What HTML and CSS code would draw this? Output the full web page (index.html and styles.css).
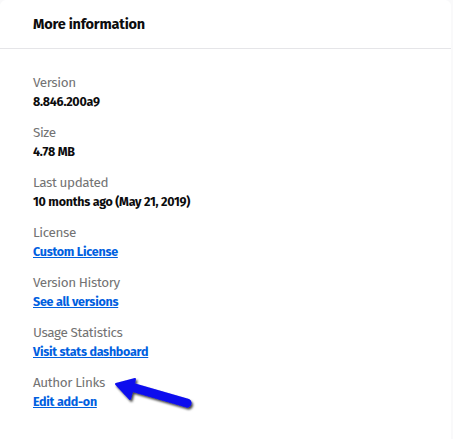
FILE: index.html
```html
<!DOCTYPE html>
<html lang="en">
<head>
<meta charset="utf-8">
<title>More information</title>
<link rel="stylesheet" href="styles.css">
</head>
<body>
<section class="card">
  <header class="card-header">
    <h2 class="card-title">More information</h2>
  </header>
  <dl class="meta">
    <div class="meta-item">
      <dt>Version</dt>
      <dd>8.846.200a9</dd>
    </div>
    <div class="meta-item">
      <dt>Size</dt>
      <dd>4.78 MB</dd>
    </div>
    <div class="meta-item">
      <dt>Last updated</dt>
      <dd>10 months ago (May 21, 2019)</dd>
    </div>
    <div class="meta-item">
      <dt>License</dt>
      <dd><a href="#">Custom License</a></dd>
    </div>
    <div class="meta-item">
      <dt>Version History</dt>
      <dd><a href="#">See all versions</a></dd>
    </div>
    <div class="meta-item">
      <dt>Usage Statistics</dt>
      <dd><a href="#">Visit stats dashboard</a></dd>
    </div>
    <div class="meta-item author">
      <dt>Author Links</dt>
      <dd><a href="#">Edit add-on</a></dd>
      <svg class="pointer" width="90" height="40" viewBox="0 0 90 40" aria-hidden="true">
        <defs>
          <filter id="drop" x="-20%" y="-40%" width="150%" height="190%">
            <feDropShadow dx="1.5" dy="2" stdDeviation="1.2" flood-color="#000" flood-opacity="0.75"/>
          </filter>
        </defs>
        <g filter="url(#drop)" fill="#0a0aee" stroke="#0a0aee" stroke-linejoin="round" stroke-linecap="round">
          <line x1="22" y1="12" x2="74" y2="27" stroke-width="9" fill="none"/>
          <polygon points="3,8 22,3 17,23" stroke-width="2"/>
        </g>
      </svg>
    </div>
  </dl>
</section>
</body>
</html>
```
FILE: styles.css
```css
html, body {
  margin: 0;
  padding: 0;
  background: #f9f9fa;
}

body {
  font-family: "Fira Sans", "Lato", "Open Sans", sans-serif;
  color: #0c0c0d;
}

.card {
  background: #fff;
  border-radius: 6px 6px 0 0;
  width: 451px;
  min-height: 439px;
}

.card-header {
  height: 48px;
  border-bottom: 1px solid #e5e5e8;
  padding: 0 33px;
  display: flex;
  align-items: center;
}

.card-title {
  margin: 0;
  font-size: 14.5px;
  letter-spacing: -0.2px;
  font-weight: 700;
  color: #0c0c0d;
}

.meta {
  margin: 0;
  padding: 24px 33px 0;
  display: flex;
  flex-direction: column;
  gap: 12px;
}

.meta-item {
  position: relative;
}

.meta dt {
  font-size: 13.5px;
  letter-spacing: -0.4px;
  line-height: 19px;
  color: #737373;
}

.meta dd {
  margin: 0;
  font-size: 12.5px;
  letter-spacing: -0.25px;
  line-height: 19px;
  font-weight: 700;
  color: #0c0c0d;
}

.meta a {
  color: #0060df;
  text-decoration: underline;
}

.pointer {
  position: absolute;
  left: 80px;
  top: 3px;
  overflow: visible;
}
```
